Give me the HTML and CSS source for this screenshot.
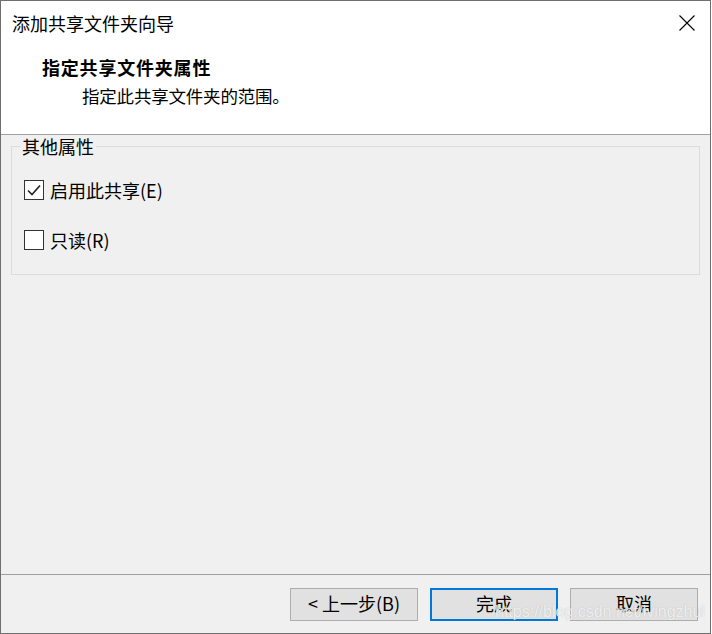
FILE: index.html
```html
<!DOCTYPE html>
<html lang="zh-CN">
<head>
<meta charset="utf-8">
<title>添加共享文件夹向导</title>
<link rel="stylesheet" href="styles.css">
</head>
<body>
<div class="window">
  <div class="top">
    <div class="titlebar">
      <span class="title">添加共享文件夹向导</span>
      <span class="close">
        <svg width="16" height="16" viewBox="0 0 16 16"><path d="M0.5 0.5 L15.5 15.5 M15.5 0.5 L0.5 15.5" stroke="#000" stroke-width="1.1" fill="none"/></svg>
      </span>
    </div>
    <div class="header">
      <div class="h-title">指定共享文件夹属性</div>
      <div class="h-sub">指定此共享文件夹的范围。</div>
    </div>
  </div>
  <div class="body">
    <fieldset class="group">
      <legend class="legend">其他属性</legend>
      <label class="row">
        <span class="box checked">
          <svg width="14" height="12" viewBox="0 0 14 12"><path d="M1 6.5 L5 10.5 L13 1.5" stroke="#222" stroke-width="1.6" fill="none"/></svg>
        </span>
        <span class="label">启用此共享(E)</span>
      </label>
      <label class="row">
        <span class="box"></span>
        <span class="label">只读(R)</span>
      </label>
    </fieldset>
  </div>
  <div class="footer">
    <button class="btn">&lt; 上一步(B)</button>
    <button class="btn primary">完成</button>
    <button class="btn">取消</button>
    <span class="watermark">https://blog.csdn.net/lvingzhul</span>
  </div>
</div>
</body>
</html>
```

FILE: styles.css
```css
html, body {
  margin: 0;
  padding: 0;
  background: #ffffff;
}
body {
  font-family: "Noto Sans CJK SC", "Noto Sans", sans-serif;
  font-size: 18px;
  color: #000;
}
.window {
  box-sizing: border-box;
  width: 711px;
  height: 634px;
  border: 1px solid #6f6f6f;
  display: flex;
  flex-direction: column;
  background: #f0f0f0;
}
.top {
  background: #ffffff;
  height: 133px;
  flex: none;
  border-bottom: 1px solid #a0a0a0;
  box-sizing: content-box;
}
.titlebar {
  height: 44px;
  display: flex;
  align-items: center;
  justify-content: space-between;
  padding: 0 15px 0 11px;
}
.title {
  font-size: 18px;
  line-height: 20px;
}
.close {
  display: flex;
  width: 16px;
  height: 16px;
}
.header {
  padding: 0 0 0 41px;
}
.h-title {
  font-weight: 700;
  font-size: 18px;
  line-height: 20px;
  letter-spacing: 0.8px;
  margin-top: 12px;
}
.h-sub {
  font-size: 17.5px;
  line-height: 20px;
  margin-top: 9px;
  padding-left: 40px;
  letter-spacing: -0.2px;
}
.body {
  flex: 1;
  padding: 1px 10px 0 10px;
}
.group {
  margin: 0;
  border: 1px solid #dcdcdc;
  padding: 24px 8px 24px 12px;
  display: flex;
  flex-direction: column;
  gap: 30px;
}
.legend {
  padding: 0 2px;
  margin-left: -4px;
  font-size: 18px;
  line-height: 20px;
  color: #000;
}
.row {
  display: flex;
  align-items: center;
  height: 20px;
  gap: 6px;
}
.box {
  box-sizing: border-box;
  width: 20px;
  height: 20px;
  border: 1px solid #333;
  background: #fff;
  display: flex;
  align-items: center;
  justify-content: center;
}
.label {
  font-size: 18px;
  line-height: 20px;
}
.footer {
  position: relative;
  flex: none;
  height: 45px;
  border-top: 1px solid #a0a0a0;
  display: flex;
  justify-content: flex-end;
  align-items: flex-start;
  gap: 12px;
  padding: 13px 12px 0 0;
  box-sizing: content-box;
}
.btn {
  box-sizing: border-box;
  width: 128px;
  height: 33px;
  background: #e1e1e1;
  border: 1px solid #adadad;
  font-family: "Noto Sans CJK SC", "Noto Sans", sans-serif;
  font-size: 18px;
  line-height: 20px;
  color: #000;
  padding: 0 0 3px 0;
  margin: 0;
}
.btn.primary {
  border: 2px solid #0078d7;
}
.watermark {
  position: absolute;
  left: 494px;
  top: 28px;
  font-family: "Liberation Sans", Arial, sans-serif;
  font-size: 16px;
  line-height: 18px;
  color: rgba(255, 255, 255, 0.8);
  text-shadow: 0 0 1px rgba(140, 140, 140, 0.6);
  white-space: nowrap;
  pointer-events: none;
}
```
